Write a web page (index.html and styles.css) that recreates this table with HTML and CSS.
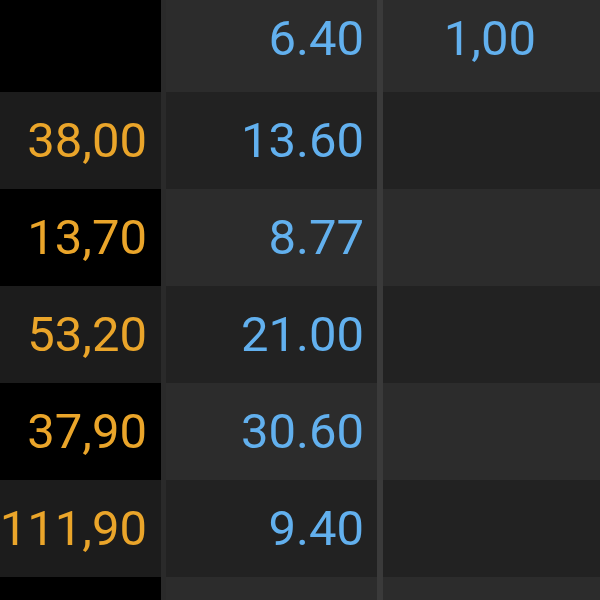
FILE: index.html
```html
<!DOCTYPE html>
<html lang="en">
<head>
  <meta charset="UTF-8" />
  <title>Quotes</title>
  <link rel="stylesheet" href="styles.css">
</head>
<body>
  <div class="grid">
    <div class="row head">
      <div class="cell c1"></div>
      <div class="cell c2">6.40</div>
      <div class="cell c3">1,00</div>
    </div>
    <div class="row odd">
      <div class="cell c1">38,00</div>
      <div class="cell c2">13.60</div>
      <div class="cell c3"></div>
    </div>
    <div class="row">
      <div class="cell c1">13,70</div>
      <div class="cell c2">8.77</div>
      <div class="cell c3"></div>
    </div>
    <div class="row odd">
      <div class="cell c1">53,20</div>
      <div class="cell c2">21.00</div>
      <div class="cell c3"></div>
    </div>
    <div class="row">
      <div class="cell c1">37,90</div>
      <div class="cell c2">30.60</div>
      <div class="cell c3"></div>
    </div>
    <div class="row odd">
      <div class="cell c1">111,90</div>
      <div class="cell c2">9.40</div>
      <div class="cell c3"></div>
    </div>
    <div class="row">
      <div class="cell c1"></div>
      <div class="cell c2"></div>
      <div class="cell c3"></div>
    </div>
  </div>
</body>
</html>
```

FILE: styles.css
```css
body {
  margin: 0;
  background: #000;
  font-family: Roboto, "Liberation Sans", sans-serif;
  overflow: hidden;
}

.grid {
  display: flex;
  flex-direction: column;
}

.row {
  display: flex;
  height: 97px;
}

.row.head {
  height: 92px;
}

.cell {
  display: flex;
  align-items: center;
  justify-content: flex-end;
  font-size: 49px;
  line-height: 1;
  box-sizing: border-box;
}

.head .cell {
  padding-bottom: 15px;
}

.c1 {
  width: 166px;
  padding-right: 14px;
  color: #eaa52a;
  background: #000;
  border-right: 5px solid #2a2a2a;
}

.c2 {
  width: 217px;
  padding-right: 13px;
  color: #62b0ee;
  background: #2c2c2c;
  border-right: 6px solid #3a3a3a;
}

.c3 {
  flex: 1;
  padding-right: 64px;
  color: #62b0ee;
  background: #2c2c2c;
}

.odd .c1 {
  background: #1c1c1c;
}

.odd .c2,
.odd .c3 {
  background: #222;
}
```
